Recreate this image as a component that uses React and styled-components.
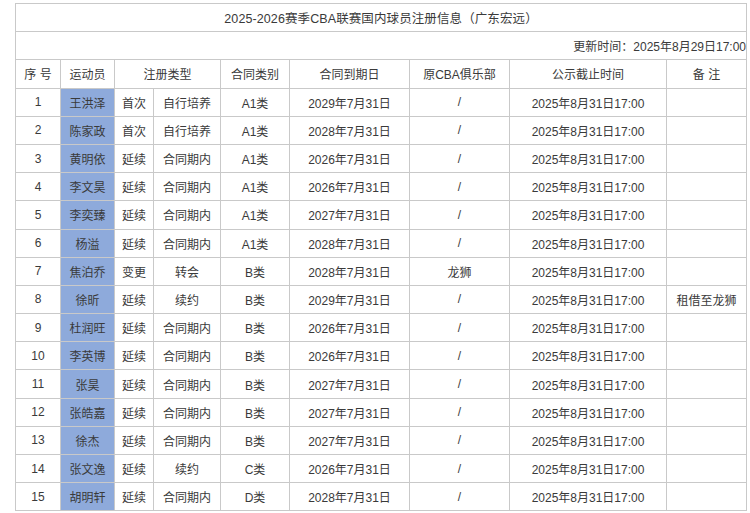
import React from "react"
import styled, { createGlobalStyle } from "styled-components"

const GlobalStyle = createGlobalStyle`
  html, body {
    margin: 0;
    padding: 0;
    background: #ffffff;
  }
  body {
    font-family: "Liberation Sans", "Noto Sans CJK SC", sans-serif;
    color: #333333;
  }
`

const colors = {
  border: "#c9c9c9",
  athlete: "#8eaadb",
  text: "#3a3a3a",
}

const Page = styled.div`
  padding: 3px 0 0 15px;
`

const Table = styled.table`
  border-collapse: collapse;
  table-layout: fixed;
  width: 731px;
  font-size: 12px;
  color: ${colors.text};
`

const Cell = styled.td`
  border: 1px solid ${colors.border};
  height: 27.2px;
  padding: 0;
  text-align: ${(p) => p.align || "center"};
  vertical-align: middle;
  white-space: nowrap;
  overflow: hidden;
  background-color: ${(p) => (p.highlight ? colors.athlete : "#ffffff")};
`

const TitleCell = styled(Cell)`
  font-size: 12.5px;
  letter-spacing: 0.1px;
`

const columns = [45, 54, 39, 67, 69, 120, 100, 157, 80]

const players = [
  ["1", "王洪泽", "首次", "自行培养", "A1类", "2029年7月31日", "/", ""],
  ["2", "陈家政", "首次", "自行培养", "A1类", "2028年7月31日", "/", ""],
  ["3", "黄明依", "延续", "合同期内", "A1类", "2026年7月31日", "/", ""],
  ["4", "李文昊", "延续", "合同期内", "A1类", "2026年7月31日", "/", ""],
  ["5", "李奕臻", "延续", "合同期内", "A1类", "2027年7月31日", "/", ""],
  ["6", "杨溢", "延续", "合同期内", "A1类", "2028年7月31日", "/", ""],
  ["7", "焦泊乔", "变更", "转会", "B类", "2028年7月31日", "龙狮", ""],
  ["8", "徐昕", "延续", "续约", "B类", "2029年7月31日", "/", "租借至龙狮"],
  ["9", "杜润旺", "延续", "合同期内", "B类", "2026年7月31日", "/", ""],
  ["10", "李英博", "延续", "合同期内", "B类", "2026年7月31日", "/", ""],
  ["11", "张昊", "延续", "合同期内", "B类", "2027年7月31日", "/", ""],
  ["12", "张皓嘉", "延续", "合同期内", "B类", "2027年7月31日", "/", ""],
  ["13", "徐杰", "延续", "合同期内", "B类", "2027年7月31日", "/", ""],
  ["14", "张文逸", "延续", "续约", "C类", "2026年7月31日", "/", ""],
  ["15", "胡明轩", "延续", "合同期内", "D类", "2028年7月31日", "/", ""],
]

const deadline = "2025年8月31日17:00"

function App() {
  return (
    <Page>
      <GlobalStyle />
      <Table>
        <colgroup>
          {columns.map((w, i) => (
            <col key={i} style={{ width: w }} />
          ))}
        </colgroup>
        <tbody>
          <tr>
            <TitleCell colSpan={9}>
              2025-2026赛季CBA联赛国内球员注册信息（广东宏远）
            </TitleCell>
          </tr>
          <tr>
            <Cell colSpan={9} align="right">
              更新时间：2025年8月29日17:00
            </Cell>
          </tr>
          <tr>
            <Cell>序 号</Cell>
            <Cell>运动员</Cell>
            <Cell colSpan={2}>注册类型</Cell>
            <Cell>合同类别</Cell>
            <Cell>合同到期日</Cell>
            <Cell>原CBA俱乐部</Cell>
            <Cell>公示截止时间</Cell>
            <Cell>备 注</Cell>
          </tr>
          {players.map(([no, name, kind, reason, grade, expiry, club, note]) => (
            <tr key={no}>
              <Cell>{no}</Cell>
              <Cell highlight>{name}</Cell>
              <Cell>{kind}</Cell>
              <Cell>{reason}</Cell>
              <Cell>{grade}</Cell>
              <Cell>{expiry}</Cell>
              <Cell>{club}</Cell>
              <Cell>{deadline}</Cell>
              <Cell>{note}</Cell>
            </tr>
          ))}
        </tbody>
      </Table>
    </Page>
  )
}

export default App
